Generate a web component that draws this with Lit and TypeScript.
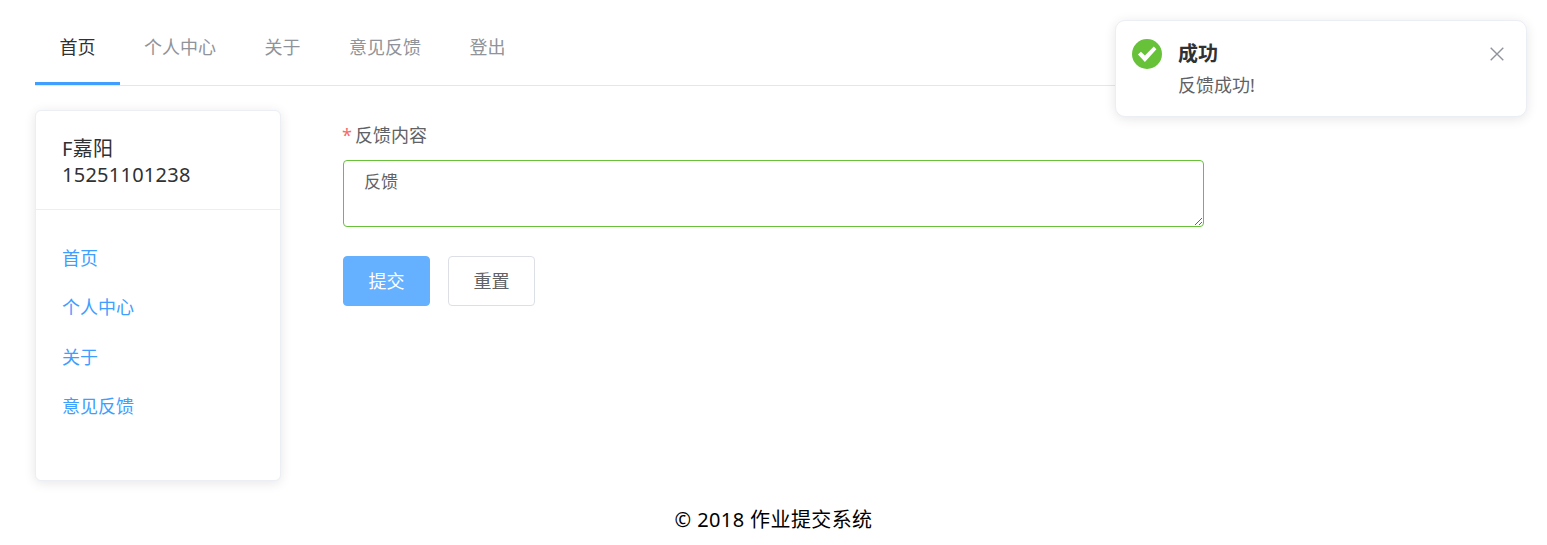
import { css, html, LitElement } from "lit";
import { customElement } from "lit/decorators.js";

const TABS = ["首页", "个人中心", "关于", "意见反馈", "登出"];
const LINKS = ["首页", "个人中心", "关于", "意见反馈"];

@customElement("app-root")
export class AppRoot extends LitElement {
  render() {
    return html`
      <div class="page">
        <nav class="tabs">
          ${TABS.map((t, i) => html`<a class="tab ${i === 0 ? "active" : ""}">${t}</a>`)}
        </nav>
        <div class="main">
          <aside class="card">
            <div class="card-head">
              <div>F嘉阳</div>
              <div>15251101238</div>
            </div>
            <ul class="links">
              ${LINKS.map((l) => html`<li><a>${l}</a></li>`)}
            </ul>
          </aside>
          <form class="form" @submit=${(e: Event) => e.preventDefault()}>
            <label class="label"><span class="star">*</span>反馈内容</label>
            <textarea class="input" .value=${"反馈"}></textarea>
            <div class="actions">
              <button class="btn primary" type="submit">提交</button>
              <button class="btn" type="button">重置</button>
            </div>
          </form>
        </div>
        <footer class="footer">© 2018 作业提交系统</footer>
      </div>
      <div class="toast">
        <svg class="toast-icon" viewBox="0 0 30 30" width="30" height="30">
          <circle cx="15" cy="15" r="15" fill="#67c23a"></circle>
          <path d="M6 15.6l2.9-2.9 4 3.7L21.8 7.6l2.6 2.7L12.9 23z" fill="#fff"></path>
        </svg>
        <div class="toast-body">
          <div class="toast-title">成功</div>
          <div class="toast-msg">反馈成功!</div>
        </div>
        <svg class="toast-close" viewBox="0 0 14 14" width="14" height="14">
          <path d="M.7.7l12.6 12.6M13.3.7L.7 13.3" fill="none" stroke="#909399" stroke-width="1.4"></path>
        </svg>
      </div>
    `;
  }

  static styles = css`
    :host {
      display: block;
      height: 545px;
      overflow: hidden;
      position: relative;
      background: #fff;
      font-family: "Noto Sans", "Noto Sans CJK SC", sans-serif;
      font-size: 18px;
    }

    .page {
      padding: 0 35px;
    }

    .tabs {
      display: flex;
      height: 85px;
      border-bottom: 1px solid #e6e6e6;
    }

    .tab {
      padding: 0 23.9px 0 24.6px;
      line-height: 94px;
      height: 85px;
      color: #909399;
      box-sizing: border-box;
    }

    .tab.active {
      color: #303133;
      padding-right: 24.4px;
      margin-right: -0.5px;
      border-bottom: 3px solid #409eff;
    }

    .main {
      display: flex;
      gap: 62px;
      margin-top: 24px;
    }

    .card {
      width: 246px;
      height: 371px;
      box-sizing: border-box;
      flex: none;
      background: #fff;
      border: 1px solid #ebeef5;
      border-radius: 6px;
      box-shadow: 0 2px 12px rgba(0, 0, 0, 0.1);
      color: #303133;
    }

    .card-head {
      padding: 25px 26px 22px;
      font-size: 20px;
      letter-spacing: 0.25px;
      line-height: 25.7px;
      border-bottom: 1px solid #ebeef5;
    }

    .links {
      list-style: none;
      margin: 0;
      padding: 23.5px 26px 0;
      color: #409eff;
      line-height: 49.3px;
    }

    .form {
      width: 861px;
      display: flex;
      flex-direction: column;
      align-items: flex-start;
    }

    .label {
      color: #606266;
      line-height: 50px;
    }

    .star {
      color: #f56c6c;
      margin-right: 3px;
      margin-left: -1px;
    }

    .input {
      width: 100%;
      height: 67px;
      box-sizing: border-box;
      border: 1px solid #67c23a;
      border-radius: 4px;
      padding: 7px 20px;
      font: inherit;
      font-size: 17px;
      line-height: 28px;
      color: #606266;
      outline: none;
      display: block;
    }

    .actions {
      display: flex;
      gap: 18px;
      margin-top: 29px;
    }

    .btn {
      width: 87px;
      height: 50px;
      box-sizing: border-box;
      border: 1px solid #dcdfe6;
      border-radius: 4px;
      background: #fff;
      color: #606266;
      font: inherit;
      padding: 0 0 2px;
    }

    .btn.primary {
      background: #66b1ff;
      border-color: #66b1ff;
      color: #fff;
    }

    .footer {
      margin-top: 22px;
      text-align: center;
      color: #000;
      font-size: 20px;
      letter-spacing: 0.4px;
      line-height: 34px;
    }

    .toast {
      position: absolute;
      left: 1115px;
      top: 20px;
      width: 412px;
      height: 97px;
      box-sizing: border-box;
      background: #fff;
      border: 1px solid #ebeef5;
      border-radius: 10px;
      box-shadow: 0 2px 12px rgba(0, 0, 0, 0.1);
      display: flex;
      align-items: flex-start;
      padding: 18px 22px 0 16px;
    }

    .toast-icon {
      flex: none;
      display: block;
    }

    .toast-body {
      flex: 1;
      margin-left: 16px;
    }

    .toast-title {
      font-size: 20px;
      font-weight: 700;
      line-height: 30px;
      color: #303133;
    }

    .toast-msg {
      color: #606266;
      line-height: 32px;
    }

    .toast-close {
      flex: none;
      margin-top: 8px;
    }
  `;
}
